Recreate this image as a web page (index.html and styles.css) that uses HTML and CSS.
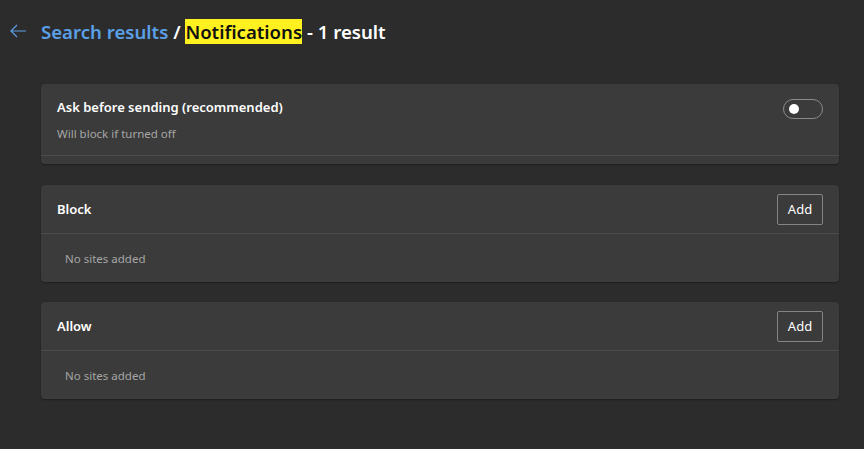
FILE: index.html
```html
<!DOCTYPE html>
<html>
<head>
<meta charset="utf-8">
<link rel="stylesheet" href="styles.css">
</head>
<body>
<div class="page">
  <div class="header">
    <span class="back">
      <svg width="17" height="14" viewBox="0 0 17 14"><path d="M7 1 L1 7 L7 13 M1 7 H16" fill="none" stroke="#5b9fe6" stroke-width="1.2"/></svg>
    </span>
    <h1 class="title"><span class="crumb">Search results</span> / <mark class="hl">Notifications</mark> - 1 result</h1>
  </div>
  <div class="cards">
    <section class="card card-first">
      <div class="row-toggle">
        <div class="texts">
          <div class="label">Ask before sending (recommended)</div>
          <div class="sub">Will block if turned off</div>
        </div>
        <span class="toggle"><span class="knob"></span></span>
      </div>
    </section>
    <section class="card card-second">
      <div class="card-head">
        <div class="label">Block</div>
        <button class="add">Add</button>
      </div>
      <div class="empty">No sites added</div>
    </section>
    <section class="card">
      <div class="card-head">
        <div class="label">Allow</div>
        <button class="add">Add</button>
      </div>
      <div class="empty">No sites added</div>
    </section>
  </div>
</div>
</body>
</html>
```
FILE: styles.css
```css
html, body {
  margin: 0;
  padding: 0;
  background: #2c2c2c;
  font-family: "Noto Sans", "Open Sans", sans-serif;
  color: #fff;
}
.page {
  width: 864px;
  height: 449px;
  box-sizing: border-box;
  padding: 0 25px 0 41px;
}
.header {
  display: flex;
  align-items: center;
  height: 63px;
  position: relative;
}
.back {
  position: absolute;
  left: -31px;
  top: 24px;
  display: flex;
}
.title {
  margin: 0;
  font-size: 18.6px;
  font-weight: 600;
  color: #fff;
}
.crumb { color: #5b9fe6; }
.hl {
  background: #fff01f;
  color: #111;
  padding: 0;
}
.cards {
  margin-top: 21px;
  display: flex;
  flex-direction: column;
  gap: 20px;
}
.card {
  background: #3b3b3b;
  border-radius: 4px;
  box-shadow: 0 1px 2px rgba(0,0,0,0.35);
}
.card-first { padding-bottom: 8px; }
.card-second { margin-top: 1px; }
.row-toggle {
  display: flex;
  align-items: center;
  justify-content: space-between;
  height: 72px;
  padding: 0 16px;
  border-bottom: 1px solid #4c4c4c;
  box-sizing: border-box;
}
.texts { display: flex; flex-direction: column; }
.label {
  font-size: 13px;
  font-weight: 600;
  color: #fff;
}
.sub {
  font-size: 11.5px;
  color: #a6a6a6;
  margin-top: 10px;
}
.row-toggle .texts { margin-top: -1px; }
.toggle {
  width: 40px;
  height: 20px;
  box-sizing: border-box;
  border: 1px solid #8a8a8a;
  border-radius: 10px;
  display: flex;
  align-items: center;
  padding-left: 5px;
  margin-top: -22px;
}
.knob {
  width: 10px;
  height: 10px;
  border-radius: 50%;
  background: #fff;
}
.card-head {
  display: flex;
  align-items: center;
  justify-content: space-between;
  height: 49px;
  padding: 0 16px;
  border-bottom: 1px solid #4c4c4c;
  box-sizing: border-box;
}
.add {
  width: 46px;
  height: 31px;
  background: transparent;
  border: 1px solid #858585;
  border-radius: 2px;
  color: #fff;
  font-family: inherit;
  font-size: 13px;
  padding: 0;
}
.empty {
  height: 48px;
  display: flex;
  align-items: center;
  padding-left: 24px;
  font-size: 11.5px;
  color: #a6a6a6;
}
```
